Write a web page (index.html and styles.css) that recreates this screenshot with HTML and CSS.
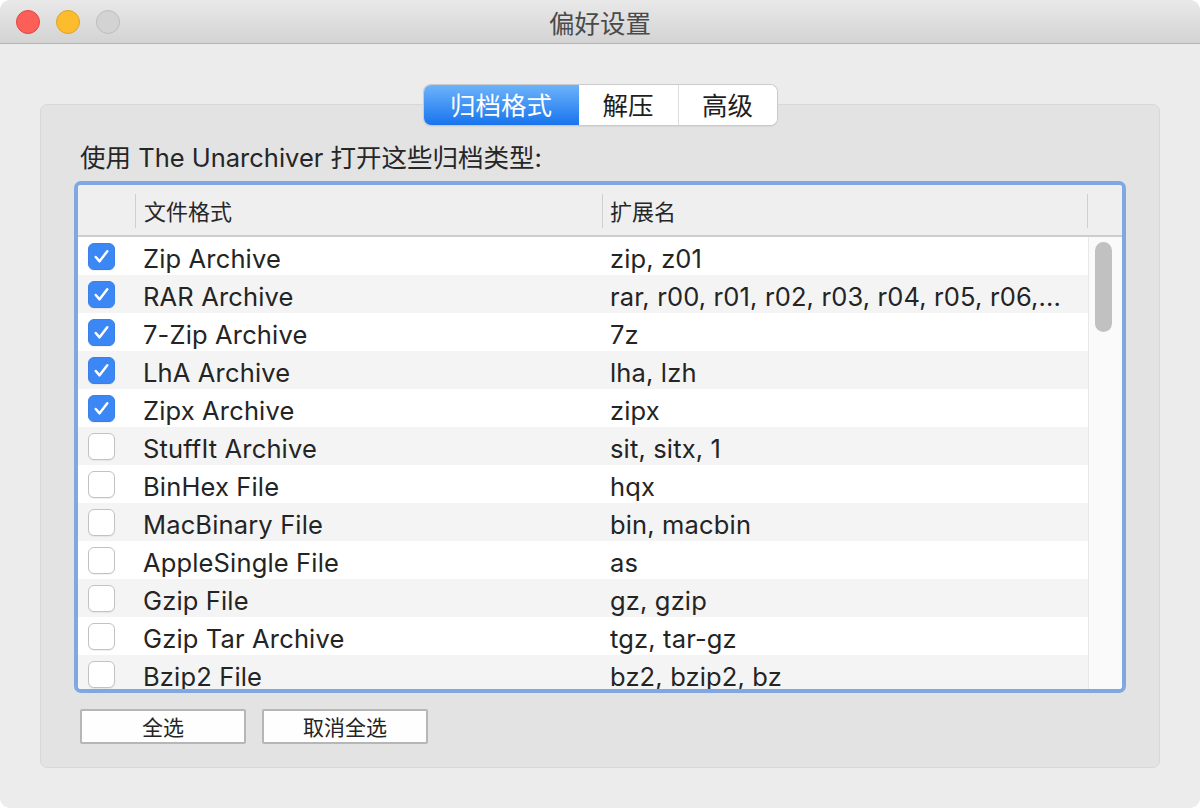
FILE: index.html
```html
<!DOCTYPE html>
<html lang="zh-CN">
<head>
<meta charset="utf-8">
<title>偏好设置</title>
<link rel="stylesheet" href="styles.css">
</head>
<body>
<div class="window">
  <header class="titlebar">
    <div class="lights">
      <span class="light red"></span>
      <span class="light yellow"></span>
      <span class="light gray"></span>
    </div>
    <div class="title">偏好设置</div>
  </header>
  <main class="content">
    <nav class="tabs">
      <span class="tab selected">归档格式</span>
      <span class="tab">解压</span>
      <span class="tab">高级</span>
    </nav>
    <section class="group">
      <p class="label">使用 The Unarchiver 打开这些归档类型:</p>
      <div class="table">
        <div class="thead">
          <div class="th th-check"></div>
          <div class="th th-name">文件格式</div>
          <div class="th th-ext">扩展名</div>
          <div class="th th-rest"></div>
        </div>
        <div class="tbody">
          <div class="rows">
            <div class="row"><span class="cb on"><svg viewBox="0 0 26 26"><path d="M7 13.5l4 4.5 8-10.5"/></svg></span><span class="name">Zip Archive</span><span class="ext">zip, z01</span></div>
            <div class="row"><span class="cb on"><svg viewBox="0 0 26 26"><path d="M7 13.5l4 4.5 8-10.5"/></svg></span><span class="name">RAR Archive</span><span class="ext">rar, r00, r01, r02, r03, r04, r05, r06,...</span></div>
            <div class="row"><span class="cb on"><svg viewBox="0 0 26 26"><path d="M7 13.5l4 4.5 8-10.5"/></svg></span><span class="name">7-Zip Archive</span><span class="ext">7z</span></div>
            <div class="row"><span class="cb on"><svg viewBox="0 0 26 26"><path d="M7 13.5l4 4.5 8-10.5"/></svg></span><span class="name">LhA Archive</span><span class="ext">lha, lzh</span></div>
            <div class="row"><span class="cb on"><svg viewBox="0 0 26 26"><path d="M7 13.5l4 4.5 8-10.5"/></svg></span><span class="name">Zipx Archive</span><span class="ext">zipx</span></div>
            <div class="row"><span class="cb"></span><span class="name">StuffIt Archive</span><span class="ext">sit, sitx, 1</span></div>
            <div class="row"><span class="cb"></span><span class="name">BinHex File</span><span class="ext">hqx</span></div>
            <div class="row"><span class="cb"></span><span class="name">MacBinary File</span><span class="ext">bin, macbin</span></div>
            <div class="row"><span class="cb"></span><span class="name">AppleSingle File</span><span class="ext">as</span></div>
            <div class="row"><span class="cb"></span><span class="name">Gzip File</span><span class="ext">gz, gzip</span></div>
            <div class="row"><span class="cb"></span><span class="name">Gzip Tar Archive</span><span class="ext">tgz, tar-gz</span></div>
            <div class="row"><span class="cb"></span><span class="name">Bzip2 File</span><span class="ext">bz2, bzip2, bz</span></div>
          </div>
          <div class="scrolltrack"><div class="thumb"></div></div>
        </div>
      </div>
      <div class="buttons">
        <button class="btn">全选</button>
        <button class="btn">取消全选</button>
      </div>
    </section>
  </main>
</div>
</body>
</html>
```
FILE: styles.css
```css
* { box-sizing: border-box; }
html, body {
  margin: 0;
  padding: 0;
  background: #ffffff;
}
body {
  width: 1200px;
  height: 808px;
  overflow: hidden;
  font-family: "Inter", "Noto Sans CJK SC", sans-serif;
  color: #242424;
}
.window {
  width: 1200px;
  height: 808px;
  background: #ececec;
  border-radius: 10px;
  overflow: hidden;
  display: flex;
  flex-direction: column;
}
.titlebar {
  height: 44px;
  flex: none;
  background: linear-gradient(#e9e9e9, #d3d3d3);
  border-bottom: 1px solid #b4b4b4;
  display: flex;
  align-items: center;
  position: relative;
}
.lights {
  display: flex;
  gap: 16px;
  padding-left: 16px;
  align-items: center;
}
.light {
  width: 24px;
  height: 24px;
  border-radius: 50%;
  display: block;
}
.light.red { background: #fc5f57; border: 1px solid #df4640; }
.light.yellow { background: #fdbc2e; border: 1px solid #dea227; }
.light.gray { background: #d3d3d3; border: 1px solid #bdbdbd; }
.title {
  position: absolute;
  left: 0;
  right: 0;
  top: 0;
  height: 43px;
  line-height: 43px;
  text-align: center;
  font-family: "Noto Sans CJK SC", sans-serif;
  font-size: 25.5px;
  color: #4a4a4a;
  pointer-events: none;
}
.content {
  flex: 1;
  display: flex;
  flex-direction: column;
  align-items: center;
  padding-top: 41px;
}
.tabs {
  position: relative;
  z-index: 1;
  display: flex;
  height: 40px;
  margin-bottom: -21px;
  background: #ffffff;
  border-radius: 7px;
  box-shadow: 0 0 0 1px #cbcbcb, 0 1px 2px rgba(0,0,0,0.18);
  overflow: hidden;
}
.tab {
  display: flex;
  align-items: center;
  justify-content: center;
  width: 99px;
  padding-bottom: 4px;
  font-family: "Noto Sans CJK SC", sans-serif;
  font-size: 25.5px;
  color: #1e1e1e;
  background: #ffffff;
}
.tab + .tab { border-left: 1px solid #dcdcdc; }
.tab.selected {
  width: 155px;
  color: #ffffff;
  background: linear-gradient(#6cb3fa, #1874ee);
}
.tab.selected + .tab { border-left: none; }
.group {
  width: 1120px;
  height: 664px;
  background: #e3e3e3;
  border: 1px solid #d8d8d8;
  border-radius: 7px;
  padding: 37px 33px 0 33px;
  display: flex;
  flex-direction: column;
}
.label {
  margin: 0 0 9px 6px;
  height: 30px;
  line-height: 32px;
  font-size: 25.5px;
  color: #262626;
  white-space: nowrap;
}
.table {
  width: 1052px;
  height: 512px;
  border: 4px solid #7ea7e4;
  border-radius: 7px;
  background: #ffffff;
  overflow: hidden;
  display: flex;
  flex-direction: column;
}
.thead {
  height: 52px;
  flex: none;
  display: flex;
  align-items: center;
  background: #efefef;
  border-bottom: 2px solid #cdcdcd;
}
.th {
  height: 100%;
  display: flex;
  align-items: center;
  font-family: "Noto Sans CJK SC", sans-serif;
  font-size: 22px;
  color: #262626;
  position: relative;
}
.th-check { width: 57px; }
.th-name { width: 467px; padding-left: 8px; border-left: 1px solid #cfcfcf; border-image: linear-gradient(transparent 10px, #cfcfcf 10px, #cfcfcf 42px, transparent 42px) 1; }
.th-ext { width: 485px; padding-left: 7px; border-left: 1px solid #cfcfcf; border-image: linear-gradient(transparent 10px, #cfcfcf 10px, #cfcfcf 42px, transparent 42px) 1; }
.th-rest { flex: 1; border-left: 1px solid #cfcfcf; border-image: linear-gradient(transparent 10px, #cfcfcf 10px, #cfcfcf 42px, transparent 42px) 1; }
.tbody {
  flex: 1;
  display: flex;
  overflow: hidden;
}
.rows {
  width: 1010px;
  flex: none;
}
.row {
  height: 38px;
  display: flex;
  align-items: center;
  font-size: 25.5px;
  letter-spacing: 0.15px;
  color: #242424;
  white-space: nowrap;
}
.row:nth-child(even) { background: #f4f4f4; }
.cb {
  width: 27px;
  height: 27px;
  margin-left: 10px;
  margin-right: 20px;
  border-radius: 6px;
  background: #ffffff;
  border: 1px solid #c2c2c2;
  box-shadow: 0 1px 1px rgba(0,0,0,0.06);
  flex: none;
  display: flex;
}
.cb.on {
  background: #3b87f6;
  border-color: #3a80e8;
}
.cb svg {
  width: 25px;
  height: 25px;
  fill: none;
  stroke: #ffffff;
  stroke-width: 2.6;
  stroke-linecap: round;
  stroke-linejoin: round;
}
.name {
  width: 467px;
  padding-left: 8px;
  padding-top: 5px;
}
.ext {
  padding-left: 8px;
  padding-top: 5px;
}
.scrolltrack {
  flex: 1;
  background: #fafafa;
  border-left: 1px solid #e8e8e8;
  padding: 5px 0 0 6px;
}
.thumb {
  width: 17px;
  height: 90px;
  border-radius: 9px;
  background: #c1c1c1;
}
.buttons {
  display: flex;
  gap: 16px;
  margin: 16px 0 0 6px;
}
.btn {
  width: 166px;
  height: 35px;
  margin: 0;
  padding: 0;
  background: #fefefe;
  border: 2px solid #b6b6b6;
  border-radius: 2px;
  font-family: "Noto Sans CJK SC", sans-serif;
  font-size: 21px;
  color: #242424;
  line-height: 1;
}
```
